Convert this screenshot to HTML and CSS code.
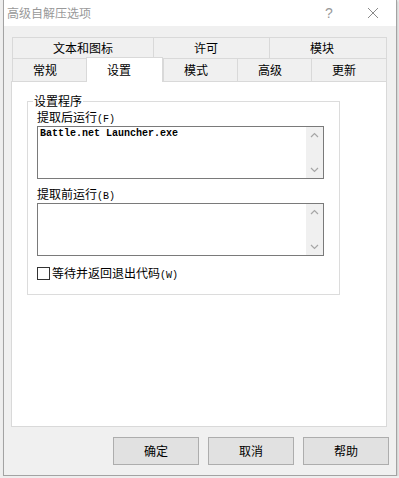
FILE: index.html
```html
<!DOCTYPE html>
<html lang="zh-CN">
<head>
    <meta charset="UTF-8">
    <title>高级自解压选项</title>
    <link rel="stylesheet" href="styles.css">
</head>
<body>

<div class="window">
    <div class="titlebar">
        <span class="title">高级自解压选项</span>
        <span class="help">?</span>
        <span class="close">
            <svg width="12" height="12" viewBox="0 0 12 12">
                <path d="M1 1 L11 11 M11 1 L1 11" stroke="#8a8a8a" stroke-width="1" fill="none"/>
            </svg>
        </span>
    </div>

    <div class="client">
        <div class="tabs">
            <div class="tab-row row-top">
                <div class="tab">文本和图标</div>
                <div class="tab">许可</div>
                <div class="tab">模块</div>
            </div>
            <div class="tab-row row-bottom">
                <div class="tab">常规</div>
                <div class="tab selected">设置</div>
                <div class="tab">模式</div>
                <div class="tab">高级</div>
                <div class="tab">更新</div>
            </div>
        </div>

        <div class="panel">
            <fieldset class="group">
                <legend>设置程序</legend>

                <div class="field-label">提取后运行<span class="key">(F)</span></div>
                <div class="edit">
                    <div class="edit-text">Battle.net Launcher.exe</div>
                    <div class="vscroll">
                        <svg width="17" height="17" viewBox="0 0 17 17"><path d="M5 10 L8.5 6.5 L12 10" stroke="#a6a6a6" stroke-width="1.2" fill="none"/></svg>
                        <svg width="17" height="17" viewBox="0 0 17 17"><path d="M5 7 L8.5 10.5 L12 7" stroke="#a6a6a6" stroke-width="1.2" fill="none"/></svg>
                    </div>
                </div>

                <div class="field-label second">提取前运行<span class="key">(B)</span></div>
                <div class="edit">
                    <div class="edit-text"></div>
                    <div class="vscroll">
                        <svg width="17" height="17" viewBox="0 0 17 17"><path d="M5 10 L8.5 6.5 L12 10" stroke="#a6a6a6" stroke-width="1.2" fill="none"/></svg>
                        <svg width="17" height="17" viewBox="0 0 17 17"><path d="M5 7 L8.5 10.5 L12 7" stroke="#a6a6a6" stroke-width="1.2" fill="none"/></svg>
                    </div>
                </div>

                <div class="check">
                    <span class="box"></span>
                    <span class="check-text">等待并返回退出代码<span class="key">(W)</span></span>
                </div>
            </fieldset>
        </div>

        <div class="buttons">
            <div class="button">确定</div>
            <div class="button">取消</div>
            <div class="button">帮助</div>
        </div>
    </div>
</div>

</body>
</html>
```

FILE: styles.css
```css
body {
    margin: 0;
    background: #eeeeee;
    font-family: "Noto Sans CJK SC", "Liberation Sans", sans-serif;
    font-size: 12px;
    color: #000;
}
.window {
    box-sizing: border-box;
    margin-left: 3px;
    width: 394px;
    height: 476px;
    border: 1px solid #a3a3a3;
    border-top: none;
    background: #f0f0f0;
    box-shadow: 1px 1px 2px rgba(0, 0, 0, 0.15);
}
.titlebar {
    height: 26px;
    background: #fff;
    display: flex;
    align-items: center;
}
.title {
    padding-left: 3px;
    color: #999;
    line-height: 16px;
    flex: 1;
}
.help {
    width: 20px;
    text-align: center;
    color: #999;
    font-family: "Liberation Sans", sans-serif;
    font-size: 14px;
    margin-right: 28px;
}
.close {
    width: 12px;
    height: 12px;
    margin-right: 17px;
    display: flex;
}
.client {
    padding: 11px 0 0 7px;
}
.tabs {
    margin-left: 1px;
    width: 375px;
}
.tab-row {
    display: grid;
}
.row-top {
    grid-template-columns: 141px 116px 118px;
}
.row-bottom {
    grid-template-columns: 74px 77px 74px 74px 76px;
}
.tab {
    box-sizing: border-box;
    border-top: 1px solid #d9d9d9;
    border-left: 1px solid #d9d9d9;
    background: #f0f0f0;
}
.tab:last-child {
    border-right: 1px solid #d9d9d9;
}
.row-top .tab {
    height: 21px;
    line-height: 20px;
    padding-left: 40px;
}
.row-bottom .tab {
    height: 23px;
    line-height: 22px;
    padding-left: 20px;
}
.row-bottom .tab.selected {
    position: relative;
    z-index: 1;
    background: #fff;
    height: 25px;
    margin-top: -1px;
    margin-bottom: -1px;
    line-height: 24px;
    border-right: 1px solid #d9d9d9;
}
.panel {
    box-sizing: border-box;
    width: 376px;
    height: 346px;
    border: 1px solid #d9d9d9;
    background: #fff;
    padding: 11px 0 0 15px;
}
.group {
    box-sizing: border-box;
    width: 313px;
    min-width: 0;
    margin: 0;
    padding: 0 0 13px 9px;
    border: 1px solid #dcdcdc;
}
.group legend {
    padding: 0 1px;
    margin-left: -4px;
    line-height: 16px;
}
.field-label {
    height: 16px;
    line-height: 16px;
}
.field-label.second {
    margin-top: 7px;
}
.key {
    font-family: "Liberation Mono", monospace;
    font-size: 10px;
    line-height: 10px;
}
.edit {
    box-sizing: border-box;
    margin-top: 1px;
    width: 287px;
    height: 53px;
    border: 1px solid #7a7a7a;
    background: #fff;
    display: flex;
}
.edit-text {
    flex: 1;
    padding-left: 2px;
    font-family: "Liberation Mono", monospace;
    font-size: 10px;
    font-weight: bold;
    line-height: 14px;
}
.vscroll {
    width: 17px;
    background: #f0f0f0;
    display: flex;
    flex-direction: column;
    justify-content: space-between;
}
.check {
    margin-top: 9px;
    height: 16px;
    display: flex;
    align-items: center;
    gap: 2px;
}
.check-text {
    line-height: 16px;
}
.box {
    box-sizing: border-box;
    width: 13px;
    height: 13px;
    border: 1px solid #333;
    background: #fff;
}
.buttons {
    display: flex;
    gap: 9px;
    margin: 10px 0 0 102px;
}
.button {
    box-sizing: border-box;
    width: 86px;
    height: 28px;
    border: 1px solid #adadad;
    background: #e1e1e1;
    text-align: center;
    line-height: 26px;
}
```
